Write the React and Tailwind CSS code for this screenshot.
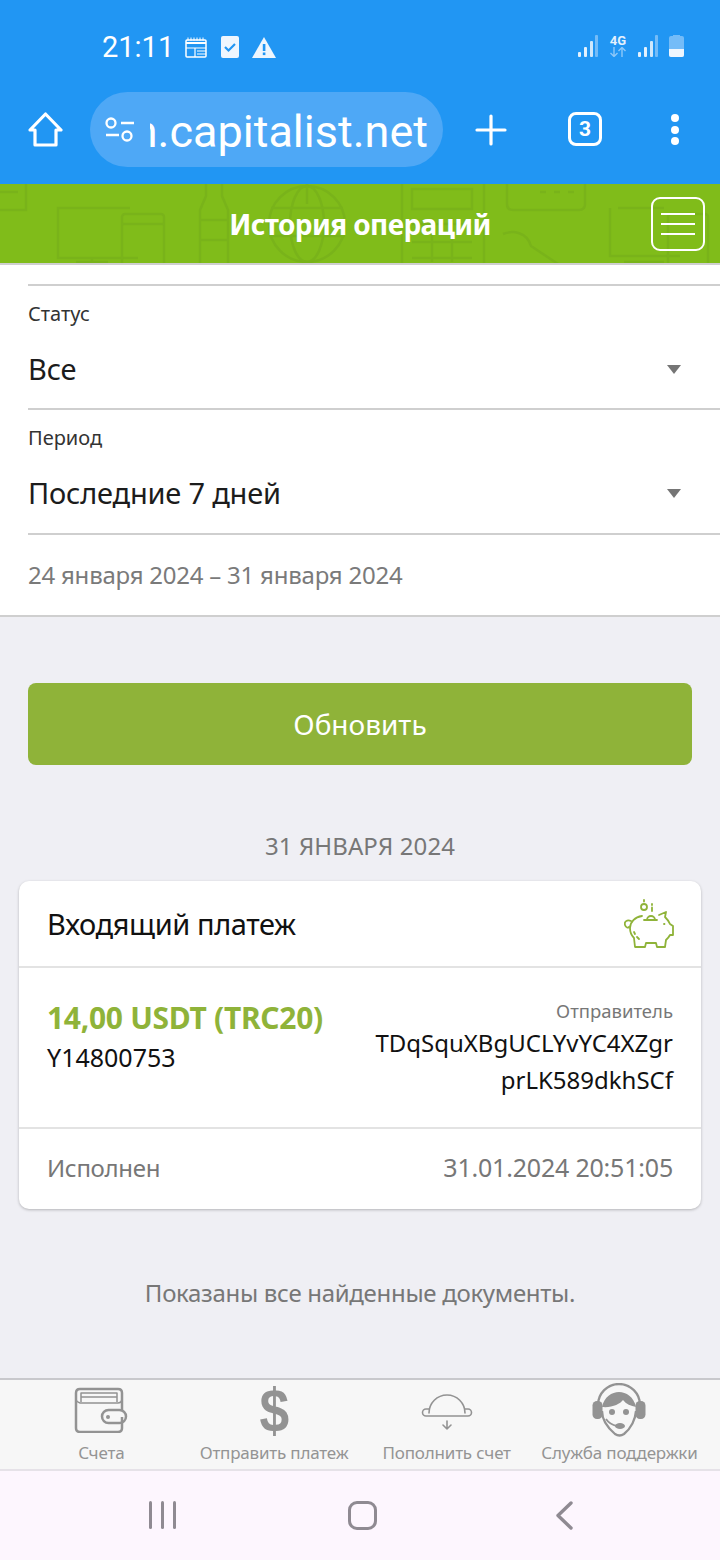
import React from 'react';

const sans = { fontFamily: '"Noto Sans", Roboto, sans-serif' };

const StatusBar = () => (
    <div className="h-[92px] flex items-start justify-between pt-[29px] pl-[102px] pr-[36px] text-white">
        <div className="flex items-center h-[36px]">
            <span className="text-[29px] leading-[36px] font-['Roboto'] w-[83px]">21:11</span>
            <svg width="22" height="21" viewBox="0 0 22 21" fill="none" stroke="white" strokeWidth="1.5">
                <rect x="1" y="3" width="20" height="17" rx="1" />
                <path d="M3 0.500v3M6 0.500v3M9 0.500v3M12 0.500v3M15 0.500v3M18 0.500v3" strokeWidth="1" />
                <path d="M1 6h20" strokeWidth="2" />
                <path d="M1 11h20M10 11v9M12 14h9M12 17h9" strokeWidth="1.200" />
            </svg>
            <svg className="ml-[14px]" width="18" height="22" viewBox="0 0 18 22">
                <rect width="18" height="22" rx="2" fill="#eef6fe" />
                <path d="M4 11l3.5 3.5L14 8" fill="none" stroke="#2196f3" strokeWidth="2.2" />
            </svg>
            <svg className="ml-[13px]" width="24" height="21" viewBox="0 0 24 21">
                <path d="M12 0L24 21H0z" fill="#eef6fe" />
                <rect x="10.8" y="7" width="2.6" height="7" fill="#2196f3" />
                <rect x="10.8" y="15.5" width="2.6" height="2.6" fill="#2196f3" />
            </svg>
        </div>
        <div className="flex items-start h-[30px] mt-[6px]">
            <Signal />
            <div className="ml-[11px] w-[18px] flex flex-col items-center">
                <span className="text-[13px] leading-[12px] font-bold font-['Roboto'] text-[#e3f1fd]">4G</span>
                <svg width="18" height="10" viewBox="0 0 18 10" fill="none" stroke="#8ec8f8" strokeWidth="1.4">
                    <path d="M5 0v9M1.5 6L5 9.5 8.500 6" />
                    <path d="M13 10V1M9.500 4L13 .5 16.500 4" />
                </svg>
            </div>
            <div className="ml-[11px]"><Signal /></div>
            <div className="ml-[11px] w-[15px] h-[21px] rounded-[2px] bg-[#74bcf8] relative mt-[1px]">
                <div className="absolute bottom-0 inset-x-0 h-[8px] bg-[#eef6fe] rounded-b-[2px]" />
                <div className="absolute -top-[1px] left-[4px] w-[7px] h-[2px] bg-[#74bcf8]" />
            </div>
        </div>
    </div>
);

const Signal = () => (
    <svg width="20" height="22" viewBox="0 0 20 22">
        <rect x="0" y="17" width="3" height="5" rx="1" fill="#e3f1fd" />
        <rect x="6" y="12" width="3" height="10" rx="1" fill="#e3f1fd" />
        <rect x="12" y="6" width="3" height="16" rx="1" fill="#cfe7fb" />
        <rect x="17" y="0" width="3" height="22" rx="1" fill="#74bcf8" />
    </svg>
);

const BrowserBar = () => (
    <div className="h-[92px] flex items-start text-white">
        <svg className="ml-[28px] mt-[20px]" width="35" height="35" viewBox="0 0 35 35" fill="none" stroke="white" strokeWidth="3.2" strokeLinejoin="round">
            <path d="M2 18L17.500 2 33 18h-5v15H7V18z" />
        </svg>
        <div className="ml-[27px] w-[353px] h-[75px] rounded-full bg-[#4ea8f6] flex items-center overflow-hidden">
            <svg className="ml-[15px] shrink-0" width="30" height="25" viewBox="0 0 30 25" fill="none" stroke="white" strokeWidth="2.300">
                <circle cx="6" cy="6" r="4.500" />
                <path d="M16 6h13M1 18h13" />
                <circle cx="22" cy="19" r="4.500" />
            </svg>
            <div className="ml-[15px] w-[278px] h-[75px] pt-[2px] flex justify-end overflow-hidden shrink-0">
                <span className="text-[45px] leading-[75px] font-['Roboto'] whitespace-nowrap shrink-0">n.capitalist.net</span>
            </div>
        </div>
        <svg className="ml-[32px] mt-[22px]" width="32" height="32" viewBox="0 0 32 32" stroke="white" strokeWidth="3.200" strokeLinecap="round">
            <path d="M16 2v28M2 16h28" />
        </svg>
        <div className="ml-[61px] mt-[20px] w-[34px] h-[34px] rounded-[8px] border-[3px] border-white flex items-center justify-center text-[21px] leading-none font-bold font-['Roboto']">3</div>
        <div className="ml-[69px] mt-[22px] flex flex-col gap-[3.500px]">
            <div className="w-[8px] h-[8px] rounded-full bg-white" />
            <div className="w-[8px] h-[8px] rounded-full bg-white" />
            <div className="w-[8px] h-[8px] rounded-full bg-white" />
        </div>
    </div>
);

const HeaderPattern = () => (
    <svg className="absolute inset-0" width="720" height="79" viewBox="0 0 720 79" fill="none" stroke="#79b31a" strokeWidth="2.500">
        <path d="M0 26h26V0M0 8h18" />
        <path d="M130 24H58v50h80M92 74v8M76 78h32" />
        <rect x="122" y="30" width="42" height="60" rx="3" />
        <path d="M122 40h42" />
        <path d="M206 0v12l-6 14v60M222 0v12l6 14v60M200 36h28M200 56h28" />
        <circle cx="307" cy="40" r="38" />
        <ellipse cx="307" cy="40" rx="17" ry="38" />
        <path d="M271 24h72M269 52h76M307 0v20" />
        <path d="M402 0v90M484 0v90" />
        <rect x="412" y="5" width="60" height="20" />
        <path d="M412 40h60M412 58h60M412 74h60M432 34v44M452 34v44" />
        <path d="M507 0v20q0 6 6 6h66q6 0 6-6V0" />
        <path d="M540 8h6M554 8h6M568 8h6" />
        <path d="M503 50c10-4 24-2 28 12l30 20" />
        <path d="M618 24h46M610 24v48h70M624 78h40" />
        <rect x="668" y="30" width="40" height="54" rx="3" />
    </svg>
);

const GreenHeader = () => (
    <div className="relative h-[79px] bg-[#80bc1a] overflow-hidden flex items-center justify-center">
        <HeaderPattern />
        <h1 className="relative text-white text-[28px] font-bold leading-none tracking-[-0.6px] mt-[1px]" style={sans}>История операций</h1>
        <div className="absolute left-[651px] top-[13px] w-[54px] h-[54px] rounded-[9px] border-[2px] border-white flex flex-col items-center justify-center gap-[8px]">
            <div className="w-[34px] h-[2px] bg-white" />
            <div className="w-[34px] h-[2px] bg-white" />
            <div className="w-[34px] h-[2px] bg-white" />
        </div>
    </div>
);

const SelectField = ({ label, value, height }) => (
    <div className={`ml-[28px] border-t-[2px] border-[#cfcfcf] pr-[39px] ${height}`}>
        <div className="text-[20px] leading-[24px] mt-[16px] text-[#333]" style={sans}>{label}</div>
        <div className="flex items-center justify-between mt-[24px]">
            <span className="text-[29px] leading-[38px] text-[#1c1c1c] tracking-[-0.2px]" style={sans}>{value}</span>
            <span className="w-0 h-0 border-x-[7.500px] border-x-transparent border-t-[9px] border-t-[#757575]" />
        </div>
    </div>
);

const Filters = () => (
    <div className="bg-white border-y-[2px] border-[#cfcfcf] pt-[19px] h-[354px]">
        <SelectField label="Статус" value="Все" height="h-[124px]" />
        <SelectField label="Период" value="Последние 7 дней" height="h-[125px]" />
        <div className="ml-[28px] border-t-[2px] border-[#cfcfcf] pt-[24px] text-[24px] leading-[32px] text-[#7a7a7a] tracking-[-0.23px]" style={sans}>
            24 января 2024 – 31 января 2024
        </div>
    </div>
);

const PiggyIcon = () => (
    <svg width="50" height="50" viewBox="0 0 50 50" fill="none" stroke="#8fb339" strokeWidth="1.800" strokeLinecap="round" strokeLinejoin="round">
        <circle cx="20" cy="8" r="3" />
        <path d="M20 1v1.500M28 5v1M28 8.500V12" />
        <path d="M20 21h13M23 21a4 4 0 0 1 8 0" />
        <path d="M18 17C11 18 6 23 6 29c0 4 2 8 4 10l1 9h10l1-4h10l1 4h8l1-7c2-2 3-3 4-5h3v-9l-3-2c-1-3-3-5-5-7l1-5-7 3" />
        <path d="M7 22c-4-2-7 1-6 4s3 3 4 2" />
        <path d="M40 25h.5M10 33l1 2M13 38l2 2" />
    </svg>
);

const Card = () => (
    <div className="mx-[19px] bg-white rounded-[10px] shadow-[0_1px_3px_rgba(0,0,0,0.25)]" style={sans}>
        <div className="h-[85px] flex items-center justify-between pl-[28px] pr-[27px]">
            <span className="text-[29px] leading-none text-[#111] tracking-[-0.4px]">Входящий платеж</span>
            <PiggyIcon />
        </div>
        <div className="h-[163px] border-y-[2px] border-[#e3e3e3] flex justify-between pl-[28px] pr-[28px]">
            <div className="pt-[32px]">
                <div className="text-[30px] leading-[36px] font-bold text-[#8fb339] tracking-[-0.3px]">14,00 USDT (TRC20)</div>
                <div className="text-[25px] leading-[32px] text-[#111] mt-[5px]">Y14800753</div>
            </div>
            <div className="pt-[30px] text-right w-[300px]">
                <div className="text-[18.500px] leading-[26px] text-[#777]">Отправитель</div>
                <div className="text-[24px] leading-[37px] text-[#111]">TDqSquXBgUCLYvYC4XZgr<br />prLK589dkhSCf</div>
            </div>
        </div>
        <div className="h-[80px] pb-[2px] flex items-center justify-between pl-[28px] pr-[28px] text-[25px] text-[#777]">
            <span className="text-[24px] tracking-[-0.3px]">Исполнен</span>
            <span className="tracking-[-0.2px]">31.01.2024 20:51:05</span>
        </div>
    </div>
);

const WalletIcon = () => (
    <svg width="54" height="46" viewBox="0 0 54 46" fill="none" stroke="#939393" strokeWidth="2.500" strokeLinejoin="round">
        <path d="M48 30v11q0 4-4 4H6q-4 0-4-4V6q0-4 4-4h38q4 0 4 4v17" />
        <path d="M2 13q1 2 4 3h38q3 0 4-3M7 15V6h36v9M7 10h36" strokeWidth="1.500" />
        <rect x="28" y="23" width="24" height="13" rx="6.500" />
        <circle cx="34" cy="30" r="2" fill="#939393" stroke="none" />
    </svg>
);

const CloudIcon = () => (
    <svg width="52" height="42" viewBox="0 0 52 42" fill="none" stroke="#939393" strokeWidth="1.600" strokeLinecap="round" strokeLinejoin="round">
        <path d="M8 24a18 18 0 0 1 36 0" />
        <path d="M8 20H5a3.500 3.500 0 0 0 0 7h42a3.500 3.500 0 0 0 0-7h-3" />
        <path d="M26 32v8M22 36l4 4 4-4" />
    </svg>
);

const SupportIcon = () => (
    <svg width="54" height="54" viewBox="0 0 54 54">
        <path d="M6 22a21 21 0 0 1 42 0" fill="none" stroke="#939393" strokeWidth="2.300" />
        <rect x="0.500" y="18" width="10" height="18" rx="4.500" fill="#939393" />
        <rect x="43.500" y="18" width="10" height="18" rx="4.500" fill="#939393" />
        <path d="M10 24c2-10 10-15 17-15s15 5 17 15c-5-1-10-3-13-7-3 4-11 8-21 7z" fill="#939393" />
        <path d="M10 28c0 9 6 17 13 23 3 2 6 2 9 0 6-5 11-12 12-23" fill="none" stroke="#939393" strokeWidth="2.300" />
        <circle cx="20" cy="29" r="3" fill="#939393" />
        <circle cx="34" cy="29" r="3" fill="#939393" />
        <path d="M14 36c2 3 6 6 11 7" fill="none" stroke="#939393" strokeWidth="1.800" />
        <ellipse cx="28" cy="43" rx="5" ry="3" fill="#939393" />
    </svg>
);

const TabItem = ({ icon, label }) => (
    <div className="flex flex-col items-center w-[172.700px]">
        <div className="h-[60px] flex items-center justify-center">{icon}</div>
        <span className="text-[17px] leading-[24px] text-[#949494] whitespace-nowrap tracking-[-0.2px] mt-[1px]" style={sans}>{label}</span>
    </div>
);

const TabBar = () => (
    <div className="h-[93px] bg-[#f7f7f7] border-t-[2px] border-[#c8c8cc] border-b-[2px] border-b-[#e6e2e8] flex pl-[15px]">
        <TabItem label="Счета" icon={<WalletIcon />} />
        <TabItem label="Отправить платеж" icon={<span className="text-[62px] leading-[56px] font-bold text-[#939393] font-['Liberation_Sans'] scale-x-[0.86]">$</span>} />
        <TabItem label="Пополнить счет" icon={<CloudIcon />} />
        <TabItem label="Служба поддержки" icon={<SupportIcon />} />
    </div>
);

const NavBar = () => (
    <div className="h-[89px] bg-[#fdf6fe] flex items-start pt-[30px] pl-[149px]">
        <div className="flex gap-[9px] h-[28px]">
            <div className="w-[3px] h-full rounded-full bg-[#8f8a92]" />
            <div className="w-[3px] h-full rounded-full bg-[#8f8a92]" />
            <div className="w-[3px] h-full rounded-full bg-[#8f8a92]" />
        </div>
        <div className="ml-[172px] w-[29px] h-[29px] rounded-[9px] border-[3.500px] border-[#8f8a92]" />
        <svg className="ml-[178px]" width="20" height="29" viewBox="0 0 20 29" fill="none" stroke="#8f8a92" strokeWidth="3.400" strokeLinecap="round" strokeLinejoin="round">
            <path d="M16 2L3 14.500 16 27" />
        </svg>
    </div>
);

const App = () => {
    return (
        <main className="w-[720px] h-[1560px] bg-[#efeff4] flex flex-col overflow-hidden">
            <div className="bg-[#2196f3] h-[184px] shrink-0">
                <StatusBar />
                <BrowserBar />
            </div>
            <GreenHeader />
            <Filters />
            <div className="mx-[28px] mt-[66px] h-[82px] rounded-[8px] bg-[#8fb339] flex items-center justify-center text-white text-[28px]" style={sans}>
                Обновить
            </div>
            <div className="mt-[63px] text-center text-[24px] leading-[36px] text-[#777] tracking-[0.1px]" style={sans}>31 ЯНВАРЯ 2024</div>
            <div className="mt-[17px]"><Card /></div>
            <div className="mt-[66px] text-center text-[24px] leading-[36px] text-[#777] tracking-[-0.3px]" style={sans}>Показаны все найденные документы.</div>
            <div className="flex-1" />
            <TabBar />
            <NavBar />
        </main>
    );
};

export default App;
